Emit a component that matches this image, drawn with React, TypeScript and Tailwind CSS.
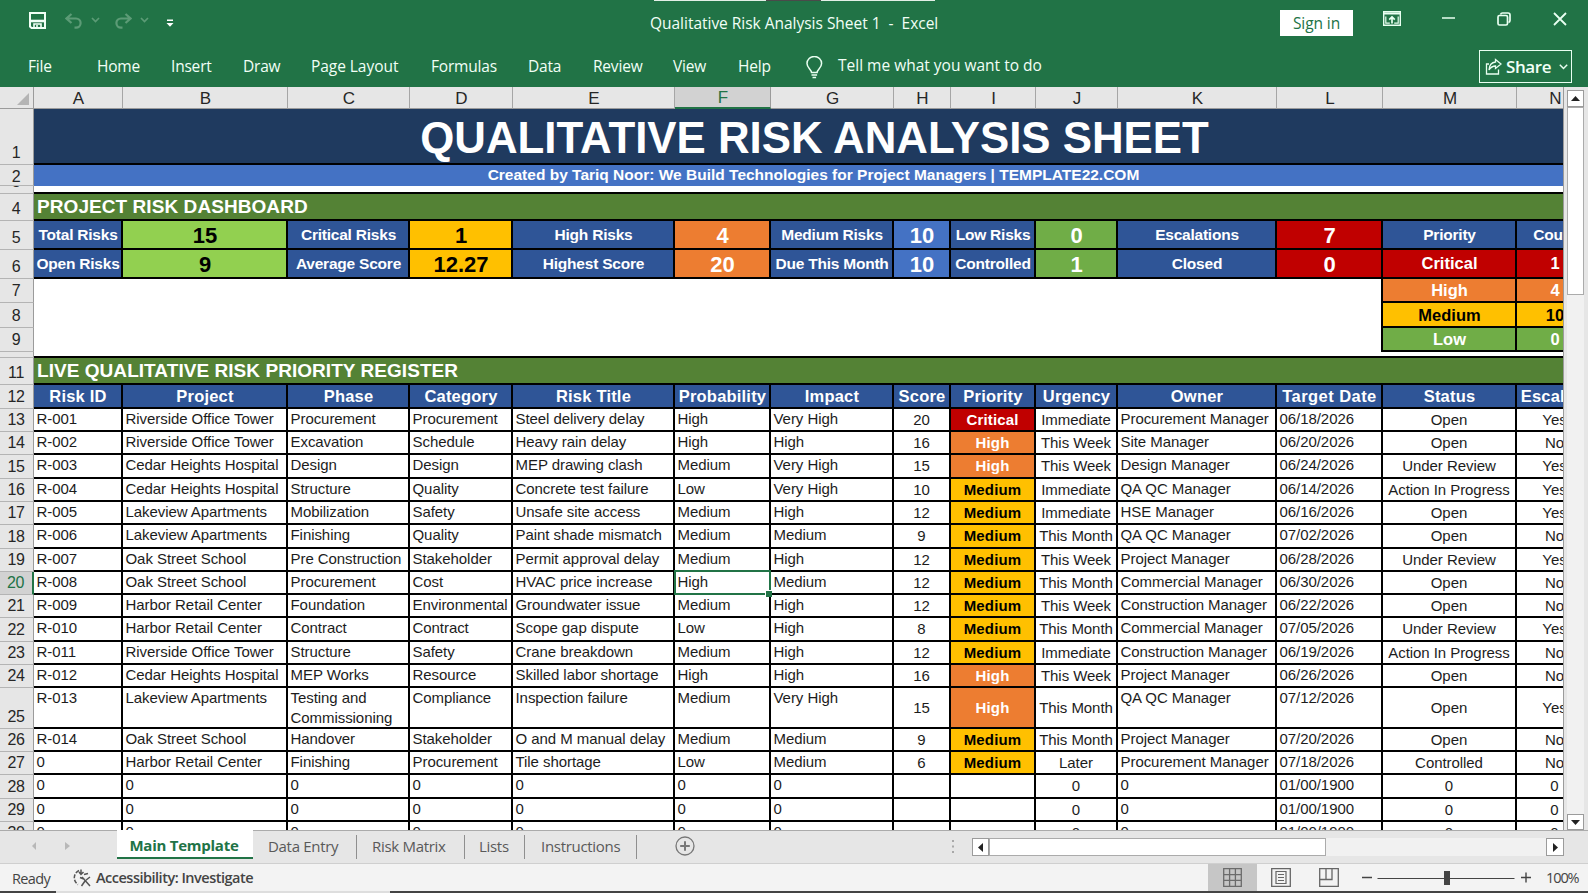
import React from "react";
import clsx from "clsx";

const W: Record<string, string> = {
  A: "w-[89px]", B: "w-[165px]", C: "w-[122px]", D: "w-[103px]", E: "w-[162px]", F: "w-[96px]", G: "w-[123px]",
  H: "w-[57px]", I: "w-[85px]", J: "w-[82px]", K: "w-[159px]", L: "w-[106px]", M: "w-[134px]", N: "w-[77px]",
};
const COLS = Object.keys(W);

const BG: Record<string, string> = {
  navy: "bg-[#2f5597] text-white", lime: "bg-[#92d050] text-black", amber: "bg-[#ffc000] text-black",
  orange: "bg-[#ed7d31] text-white", blue: "bg-[#4472c4] text-white", green: "bg-[#70ad47] text-white", red: "bg-[#c00000] text-white",
};
const PRIORITY: Record<string, string> = { Critical: BG.red, High: BG.orange, Medium: BG.amber };

function RowHead({ n, h, active }: { n: string; h: string; active?: boolean }) {
  return (
    <div
      className={clsx(
        "flex w-[34px] shrink-0 items-end justify-center overflow-hidden border-b border-[#b4b4b4] pr-[1px] text-[16px] leading-[17px] tracking-[-0.4px]",
        h,
        active ? "border-r-2 border-r-[#217346] bg-[#d2d2d2] text-[#217346]" : "border-r border-r-[#9b9b9b] bg-[#e6e6e6] text-[#262626]",
      )}
    >
      <span className={n === "2" ? "mb-0" : "mb-[3px]"}>{n}</span>
    </div>
  );
}

function Row({ n, h, active, children }: { n: string; h: string; active?: boolean; children?: React.ReactNode }) {
  return (
    <div className="flex">
      <RowHead n={n} h={h} active={active} />
      <div className={clsx("flex w-[1529px] shrink-0 overflow-hidden bg-white", active && "overflow-visible", h)}>{children}</div>
    </div>
  );
}

function Band({ className, children }: { className: string; children: React.ReactNode }) {
  return <div className={clsx("flex h-full w-full items-center whitespace-nowrap border-black", className)}>{children}</div>;
}

function Cell({ col, className, children }: { col: string; className?: string; children?: React.ReactNode }) {
  return (
    <div className={clsx("flex h-full shrink-0 whitespace-nowrap border-b-2 border-r-2 border-black", W[col], className)}>
      {children}
    </div>
  );
}

const DASH: [string, string, string[]][] = [
  ["5", "h-[29px]", ["Total Risks", "15", "Critical Risks", "1", "High Risks", "4", "Medium Risks", "10", "Low Risks", "0", "Escalations", "7", "Priority", "Count"]],
  ["6", "h-[29px]", ["Open Risks", "9", "Average Score", "12.27", "Highest Score", "20", "Due This Month", "10", "Controlled", "1", "Closed", "0", "Critical", "1"]],
];
const DASH_BG = [BG.navy, BG.lime, BG.navy, BG.amber, BG.navy, BG.orange, BG.navy, BG.blue, BG.navy, BG.green, BG.navy, BG.red];
const SUMMARY: [string, string, string, string, string][] = [
  ["7", "h-[24px]", "High", "4", BG.orange],
  ["8", "h-[25px]", "Medium", "10", BG.amber],
  ["9", "h-[24px]", "Low", "0", BG.green],
];
const HEADERS = ["Risk ID", "Project", "Phase", "Category", "Risk Title", "Probability", "Impact", "Score", "Priority", "Urgency", "Owner", "Target Date", "Status", "Escalate"];

const RISKS: [string, string, string][] = [
  ["13", "h-[23px]", "R-001|Riverside Office Tower|Procurement|Procurement|Steel delivery delay|High|Very High|20|Critical|Immediate|Procurement Manager|06/18/2026|Open|Yes"],
  ["14", "h-[23px]", "R-002|Riverside Office Tower|Excavation|Schedule|Heavy rain delay|High|High|16|High|This Week|Site Manager|06/20/2026|Open|No"],
  ["15", "h-[24px]", "R-003|Cedar Heights Hospital|Design|Design|MEP drawing clash|Medium|Very High|15|High|This Week|Design Manager|06/24/2026|Under Review|Yes"],
  ["16", "h-[23px]", "R-004|Cedar Heights Hospital|Structure|Quality|Concrete test failure|Low|Very High|10|Medium|Immediate|QA QC Manager|06/14/2026|Action In Progress|Yes"],
  ["17", "h-[23px]", "R-005|Lakeview Apartments|Mobilization|Safety|Unsafe site access|Medium|High|12|Medium|Immediate|HSE Manager|06/16/2026|Open|Yes"],
  ["18", "h-[24px]", "R-006|Lakeview Apartments|Finishing|Quality|Paint shade mismatch|Medium|Medium|9|Medium|This Month|QA QC Manager|07/02/2026|Open|No"],
  ["19", "h-[23px]", "R-007|Oak Street School|Pre Construction|Stakeholder|Permit approval delay|Medium|High|12|Medium|This Week|Project Manager|06/28/2026|Under Review|Yes"],
  ["20", "h-[23px]", "R-008|Oak Street School|Procurement|Cost|HVAC price increase|High|Medium|12|Medium|This Month|Commercial Manager|06/30/2026|Open|No"],
  ["21", "h-[23px]", "R-009|Harbor Retail Center|Foundation|Environmental|Groundwater issue|Medium|High|12|Medium|This Week|Construction Manager|06/22/2026|Open|No"],
  ["22", "h-[24px]", "R-010|Harbor Retail Center|Contract|Contract|Scope gap dispute|Low|High|8|Medium|This Month|Commercial Manager|07/05/2026|Under Review|Yes"],
  ["23", "h-[23px]", "R-011|Riverside Office Tower|Structure|Safety|Crane breakdown|Medium|High|12|Medium|Immediate|Construction Manager|06/19/2026|Action In Progress|No"],
  ["24", "h-[23px]", "R-012|Cedar Heights Hospital|MEP Works|Resource|Skilled labor shortage|High|High|16|High|This Week|Project Manager|06/26/2026|Open|No"],
  ["25", "h-[41px]", "R-013|Lakeview Apartments|Testing and Commissioning|Compliance|Inspection failure|Medium|Very High|15|High|This Month|QA QC Manager|07/12/2026|Open|Yes"],
  ["26", "h-[23px]", "R-014|Oak Street School|Handover|Stakeholder|O and M manual delay|Medium|Medium|9|Medium|This Month|Project Manager|07/20/2026|Open|No"],
  ["27", "h-[23px]", "0|Harbor Retail Center|Finishing|Procurement|Tile shortage|Low|Medium|6|Medium|Later|Procurement Manager|07/18/2026|Controlled|No"],
  ["28", "h-[24px]", "0|0|0|0|0|0|0|||0|0|01/00/1900|0|0"],
  ["29", "h-[23px]", "0|0|0|0|0|0|0|||0|0|01/00/1900|0|0"],
  ["30", "h-[23px]", "0|0|0|0|0|0|0|||0|0|01/00/1900|0|0"],
];
const CENTERED = "HIJMN";

function RiskRow({ n, h, data }: { n: string; h: string; data: string }) {
  return (
    <Row n={n} h={h} active={n === "20"}>
      {data.split("|").map((v, i) => {
        const col = COLS[i];
        const centered = CENTERED.includes(col);
        const pri = col === "I" && v ? PRIORITY[v] : "";
        return (
          <Cell
            key={col}
            col={col}
            className={clsx(
              "text-[15px] leading-[20px]",
              centered ? "items-center justify-center" : "items-start pl-[2.5px]",
              pri ? clsx(pri, "font-bold tracking-[0.15px]") : "tracking-[-0.06px] text-[#1c1c1c]",
              n === "20" && col === "F" && "relative",
            )}
          >
            {v === "Testing and Commissioning" ? <span>Testing and<br />Commissioning</span> : <span>{v}</span>}
            {n === "20" && col === "F" && (
              <span className="absolute -left-[1px] -top-[2px] h-[25px] w-[97px] border-2 border-[#217346]">
                <span className="absolute -bottom-[4px] -right-[3px] size-[7px] border-l border-t border-white bg-[#217346]" />
              </span>
            )}
          </Cell>
        );
      })}
    </Row>
  );
}

function TitleBar() {
  return (
    <div className="relative flex h-[45px] text-white">
      <div className="absolute left-[654px] top-0 flex h-px w-[281px] bg-[#e3efe7]">
        <div className="ml-[112px] w-[55px] bg-[#4a4a4a]" />
      </div>
      <div className="flex w-[650px] items-start pl-[29px] pt-[12px]">
        <svg width="17" height="17" viewBox="0 0 17 17" fill="none" stroke="#f1fff6" strokeWidth="2">
          <path d="M1 1h15v15H2.500L1 14.500z" />
          <path d="M2 9h13" strokeWidth="2.600" />
          <path d="M5 16v-4h7v4M8 13v3" strokeWidth="1.600" />
        </svg>
        <svg className="ml-[19px] mt-[1px]" width="18" height="16" viewBox="0 0 18 16" fill="none" stroke="#5c9b76" strokeWidth="2.200">
          <path d="M6.500 1L1.500 5.500l5 4.500M2 5.500h9a4.600 4.600 0 0 1 0 9.200H9.500" />
        </svg>
        <svg className="ml-[8px] mt-[5px]" width="9" height="6" viewBox="0 0 9 6" fill="none" stroke="#5c9b76" strokeWidth="1.700"><path d="M1 1l3.500 3.500L8 1" /></svg>
        <svg className="ml-[14px] mt-[1px]" width="18" height="16" viewBox="0 0 18 16" fill="none" stroke="#5c9b76" strokeWidth="2.200">
          <path d="M11.500 1l5 4.500-5 4.500M16 5.500H7a4.600 4.600 0 0 0 0 9.200h1.500" />
        </svg>
        <svg className="ml-[8px] mt-[5px]" width="9" height="6" viewBox="0 0 9 6" fill="none" stroke="#5c9b76" strokeWidth="1.700"><path d="M1 1l3.500 3.500L8 1" /></svg>
        <svg className="ml-[17px] mt-[7px]" width="8" height="9" viewBox="0 0 8 9" fill="#fff"><path d="M1 .5h6V2H1zM0.500 4h7L4 7.800z" /></svg>
      </div>
      <div className="w-[630px] whitespace-pre pt-[11px] text-[15.500px] leading-[24px] tracking-[-0.02px] text-[#f1fff6]">Qualitative Risk Analysis Sheet 1  -  Excel</div>
      <div className="mt-[10px] flex h-[26px] w-[73px] items-center justify-center bg-white pt-[2px] text-[15.500px] tracking-[-0.1px] text-[#217346]">Sign in</div>
      <svg className="ml-[30px] mt-[11px]" width="18" height="15" viewBox="0 0 18 15" fill="none" stroke="#e9fff1" strokeWidth="1.400">
        <path d="M.7.700h16.600v13.600H.7z" /><path d="M1 2.500h16" strokeWidth="2" /><path d="M9 12.500V6M6.200 8.700L9 6l2.800 2.700" strokeWidth="1.700" /><path d="M2.800 5.500v6.700h4M15.200 5.500v6.700h-4" strokeWidth="1.200" />
      </svg>
      <svg className="ml-[41px] mt-[17px]" width="13" height="2" viewBox="0 0 13 2"><path d="M0 1h13" stroke="#e9fff1" strokeWidth="1.500" /></svg>
      <svg className="ml-[42px] mt-[12px]" width="14" height="14" viewBox="0 0 14 14" fill="none" stroke="#e9fff1" strokeWidth="1.700">
        <rect x="1" y="3.500" width="9.500" height="9.500" rx="1.500" /><path d="M3.500 2.500Q4 1 5.500 1H11q2 0 2 2v5.500q0 1.500-1.500 2" />
      </svg>
      <svg className="ml-[42px] mt-[12px]" width="14" height="14" viewBox="0 0 14 14"><path d="M1 1l12 12M13 1L1 13" stroke="#e9fff1" strokeWidth="1.800" /></svg>
    </div>
  );
}

const MENU: [string, string][] = [
  ["File", "w-[69px]"], ["Home", "w-[74px]"], ["Insert", "w-[72px]"], ["Draw", "w-[68px]"], ["Page Layout", "w-[120px] tracking-[-0.05px]"], ["Formulas", "w-[97px]"],
  ["Data", "w-[65px]"], ["Review", "w-[80px]"], ["View", "w-[65px]"], ["Help", "w-[68px]"],
];

function MenuBar() {
  return (
    <div className="flex h-[42px] whitespace-nowrap pl-[28px] text-[15.500px] leading-[24px] text-[#f1fff6]">
      {MENU.map(([t, w]) => (
        <span key={t} className={clsx("shrink-0 pt-[9px]", w, t !== "Page Layout" && "tracking-[-0.2px]")}>{t}</span>
      ))}
      <svg className="mt-[11px] shrink-0" width="17" height="23" viewBox="0 0 17 23" fill="none" stroke="#e9fff1" strokeWidth="1.500">
        <path d="M5.500 16.500c0-3-4.500-4.500-4.500-9a7.300 7 0 0 1 14.600 0c0 4.500-4.500 6-4.500 9zM5.500 19h5.600M6.500 21.500h3.600" />
      </svg>
      <span className="ml-[15px] w-[641px] shrink-0 pt-[8px] tracking-[0px]">Tell me what you want to do</span>
      <div className="mt-[5px] flex h-[33px] w-[93px] shrink-0 items-center border border-[#e9fff1] pl-[5px]">
        <svg width="17" height="17" viewBox="0 0 17 17" fill="none" stroke="#e9fff1" strokeWidth="1.300">
          <path d="M4 6H1.500v10h12v-4.500" /><path d="M10.500 1.500L16 6l-5.500 4.500V8Q6.500 8 4 12q.5-7.500 6.500-8z" />
        </svg>
        <span className="ml-[4px] w-[45px] text-[17px] font-semibold tracking-[-0.4px]">Share</span>
        <svg className="ml-[8px]" width="9" height="6" viewBox="0 0 9 6" fill="none" stroke="#e9fff1" strokeWidth="1.500"><path d="M.8.800l3.700 3.700L8.200.800" /></svg>
      </div>
    </div>
  );
}

function Sheet() {
  return (
    <div className="flex h-[743px] overflow-hidden bg-[#e6e6e6] font-['Liberation_Sans',Arial,sans-serif]">
      <div className="w-[1564px] shrink-0 overflow-hidden border-r border-[#9b9b9b]">
        <div className="flex h-[22px] bg-[#e6e6e6]">
          <div className="flex w-[34px] shrink-0 items-end justify-end border-b border-r border-[#9b9b9b] pb-[3px] pr-[4px]">
            <svg width="12" height="12" viewBox="0 0 12 12"><path d="M12 0v12H0z" fill="#b4b4b4" /></svg>
          </div>
          {COLS.map((c) => (
            <div
              key={c}
              className={clsx(
                "flex shrink-0 items-center justify-center border-r pl-[1px] pt-[2px] text-[17px] leading-[20px]",
                W[c],
                c === "F" ? "border-b-2 border-b-[#217346] border-r-[#9b9b9b] bg-[#d2d2d2] text-[#217346]" : "border-b border-b-[#9b9b9b] border-r-[#a6a6a6] text-[#262626]",
              )}
            >
              {c}
            </div>
          ))}
        </div>
        <Row n="1" h="h-[56px]">
          <Band className="justify-center border-b-2 bg-[#1f3a5f] pt-[3px] text-[43.800px] font-bold leading-none text-white">
            <span className="ml-[32px]">QUALITATIVE RISK ANALYSIS SHEET</span>
          </Band>
        </Row>
        <Row n="2" h="h-[21px]">
          <Band className="justify-center bg-[#4472c4] pb-[2px] text-[15.500px] font-bold text-white">
            <span className="ml-[30px]">Created by Tariq Noor: We Build Technologies for Project Managers | TEMPLATE22.COM</span>
          </Band>
        </Row>
        <Row n="3" h="h-[8px]"><Band className="border-b-2 bg-white">{null}</Band></Row>
        <Row n="4" h="h-[27px]">
          <Band className="border-b-2 bg-[#548235] pl-[3px] pt-[2px] text-[19px] font-bold tracking-[0.07px] text-white">PROJECT RISK DASHBOARD</Band>
        </Row>
        {DASH.map(([n, h, vals]) => (
          <Row key={n} n={n} h={h}>
            {vals.map((v, i) => (
              <Cell
                key={COLS[i]}
                col={COLS[i]}
                className={clsx(
                  "items-center justify-center pl-[1px] font-bold",
                  i < 12 ? DASH_BG[i] : n === "5" ? BG.navy : BG.red,
                  i < 12 && i % 2 === 1 ? "pt-[1px] text-[22px]" : i >= 12 && n === "6" ? "text-[16.500px]" : "pt-[1px] text-[15.500px] tracking-[-0.22px]",
                )}
              >
                {v}
              </Cell>
            ))}
          </Row>
        ))}
        {SUMMARY.map(([n, h, label, count, bg]) => (
          <Row key={n} n={n} h={h}>
            <div className="w-[1347px] shrink-0" />
            <div className="w-[2px] shrink-0 bg-black" />
            <Cell col="M" className={clsx("items-center justify-center pl-[1px] pt-[1px] text-[16.500px] font-bold", bg)}>{label}</Cell>
            <Cell col="N" className={clsx("items-center justify-center pl-[1px] pt-[1px] text-[16.500px] font-bold", bg)}>{count}</Cell>
          </Row>
        ))}
        <Row n="" h="h-[6px]"><Band className="border-b-2 bg-white">{null}</Band></Row>
        <Row n="11" h="h-[27px]">
          <Band className="border-b-2 bg-[#548235] pl-[3px] pt-[2px] text-[19px] font-bold tracking-[0.05px] text-white">LIVE QUALITATIVE RISK PRIORITY REGISTER</Band>
        </Row>
        <Row n="12" h="h-[24px]">
          {HEADERS.map((v, i) => (
            <Cell key={v} col={COLS[i]} className={clsx("items-center justify-center pl-[1px] text-[16.500px] font-bold", v === "Target Date" ? "tracking-[0.45px]" : "tracking-[0.2px]", BG.navy)}>{v}</Cell>
          ))}
        </Row>
        {RISKS.map(([n, h, data]) => <RiskRow key={n} n={n} h={h} data={data} />)}
      </div>
      <div className="flex w-[24px] flex-col pl-[3px] pt-[3px]">
        <div className="flex h-[17px] w-[17px] items-center justify-center border border-[#9b9b9b] bg-white">
          <svg width="9" height="5" viewBox="0 0 9 5"><path d="M4.500 0L9 5H0z" fill="#222" /></svg>
        </div>
        <div className="h-[188px] w-[17px] border border-[#ababab] bg-white" />
        <div className="w-[17px] grow bg-[#f1f1f1]" />
        <div className="flex h-[16px] w-[17px] items-center justify-center border border-[#9b9b9b] bg-white">
          <svg width="9" height="5" viewBox="0 0 9 5"><path d="M0 0h9L4.500 5z" fill="#222" /></svg>
        </div>
      </div>
    </div>
  );
}

const TABS: [string, string][] = [["Data Entry", "w-[104px] pl-[15px]"], ["Risk Matrix", "w-[108px] pl-[15px]"], ["Lists", "w-[60px] pl-[14px]"], ["Instructions", "w-[112px] pl-[16px]"]];

function TabBar() {
  return (
    <div className="flex h-[33px] border-t border-[#ababab] bg-[#e6e6e6]">
      <div className="flex w-[117px] shrink-0 items-start pl-[32px] pt-[11px]">
        <svg width="4" height="8" viewBox="0 0 4 8"><path d="M4 0v8L0 4z" fill="#b8b8b8" /></svg>
        <svg className="ml-[29px]" width="5" height="8" viewBox="0 0 5 8"><path d="M0 0v8l5-4z" fill="#b8b8b8" /></svg>
      </div>
      <div className="-mt-px flex h-[29px] w-[136px] shrink-0 items-center justify-center whitespace-nowrap border-b-2 border-[#217346] bg-white pr-[2px] pt-[4px] text-[15px] font-bold tracking-[-0.25px] text-[#217346]">Main Template</div>
      {TABS.map(([t, w]) => (
        <div key={t} className={clsx("mt-[4px] h-[24px] shrink-0 whitespace-nowrap border-r border-[#8f8f8f] text-[15px] leading-[22px] tracking-[-0.3px] text-[#595959]", w)}>{t}</div>
      ))}
      <svg className="ml-[38px] mt-[5px] shrink-0" width="20" height="20" viewBox="0 0 20 20" fill="none" stroke="#777">
        <circle cx="10" cy="10" r="9" strokeWidth="1.300" /><path d="M10 5.200v9.600M5.200 10h9.600" strokeWidth="2" />
      </svg>
      <svg className="ml-[257px] mt-[9px] shrink-0" width="2" height="13" viewBox="0 0 2 13"><path d="M0 0h2v2H0zM0 5.500h2v2H0zM0 11h2v2H0z" fill="#a8a8a8" /></svg>
      <div className="ml-[18px] mt-[7px] flex h-[18px] w-[592px] shrink-0 bg-[#f1f1f1]">
        <div className="flex w-[17px] items-center justify-center border border-[#9b9b9b] bg-white">
          <svg width="5" height="9" viewBox="0 0 5 9"><path d="M5 0v9L0 4.500z" fill="#222" /></svg>
        </div>
        <div className="w-[337px] border border-[#ababab] bg-white" />
        <div className="ml-auto flex w-[18px] items-center justify-center border border-[#9b9b9b] bg-white">
          <svg width="5" height="9" viewBox="0 0 5 9"><path d="M0 0v9l5-4.500z" fill="#222" /></svg>
        </div>
      </div>
    </div>
  );
}

function StatusBar() {
  return (
    <div className="flex h-[28px] items-center whitespace-nowrap border-t border-[#cfcfcf] bg-[#f3f3f3] pl-[12px] text-[15px] text-[#444]">
      <span className="w-[61px] shrink-0 pt-[2px] text-[14.500px] tracking-[-0.65px]">Ready</span>
      <svg className="shrink-0" width="18" height="18" viewBox="0 0 18 18" fill="none" stroke="#555" strokeWidth="1.500">
        <path d="M6 1.500A8 8 0 0 0 5 15.500" strokeDasharray="4 1.500" /><path d="M8 .5v5M6 3l2 2.500L10.500 3M11 5.500l4-1M9 8l8 9M17 8l-4.500 3.500M8.500 17l3.500-5M7 8.500l5 2" />
      </svg>
      <span className="ml-[5px] w-[1112px] shrink-0 text-[14.500px] font-semibold tracking-[-0.5px]">Accessibility: Investigate</span>
      <div className="flex h-full w-[49px] shrink-0 items-center justify-center bg-[#c6c6c6]">
        <svg width="19" height="19" viewBox="0 0 19 19" fill="none" stroke="#6b6b6b" strokeWidth="1.300"><path d="M.7.700h17.600v17.600H.7zM6.600.700v17.600M12.400.700v17.600M.7 6.600h17.600M.7 12.400h17.600" /></svg>
      </div>
      <svg className="ml-[14px] shrink-0" width="20" height="19" viewBox="0 0 20 19" fill="none" stroke="#666" strokeWidth="1.300"><path d="M.7.700h18.600v17.600H.7z" /><path d="M5 3.500h10v12H5zM7 6.500h6M7 9.500h6M7 12.500h6" strokeWidth="1.200" /></svg>
      <svg className="ml-[28px] shrink-0" width="20" height="19" viewBox="0 0 20 19" fill="none" stroke="#666" strokeWidth="1.300"><path d="M.7.700h18.600v17.600H.7zM7 .7v10.800M.7 11.500h12.300V.7" /></svg>
      <svg className="ml-[22px] shrink-0" width="170" height="16" viewBox="0 0 170 16" fill="none" stroke="#444" strokeWidth="1.400">
        <path d="M1 7.500h10M160 7.500h10M165 2.500v10" /><path d="M16.500 8.500h137" strokeWidth="1.200" /><path d="M83 1h6v14h-6z" fill="#444" stroke="none" />
      </svg>
      <span className="ml-[15px] text-[14.500px] tracking-[-1.1px]">100%</span>
    </div>
  );
}

export default function App() {
  return (
    <div className="h-[893px] w-[1588px] overflow-hidden bg-[#e6e6e6] font-['Open_Sans','Noto_Sans',sans-serif]">
      <div className="bg-[#217346]">
        <TitleBar />
        <MenuBar />
      </div>
      <Sheet />
      <TabBar />
      <StatusBar />
      <div className="flex h-[2px] bg-[#444]"><div className="ml-[56px] w-[334px] bg-[#dedede]" /></div>
    </div>
  );
}
